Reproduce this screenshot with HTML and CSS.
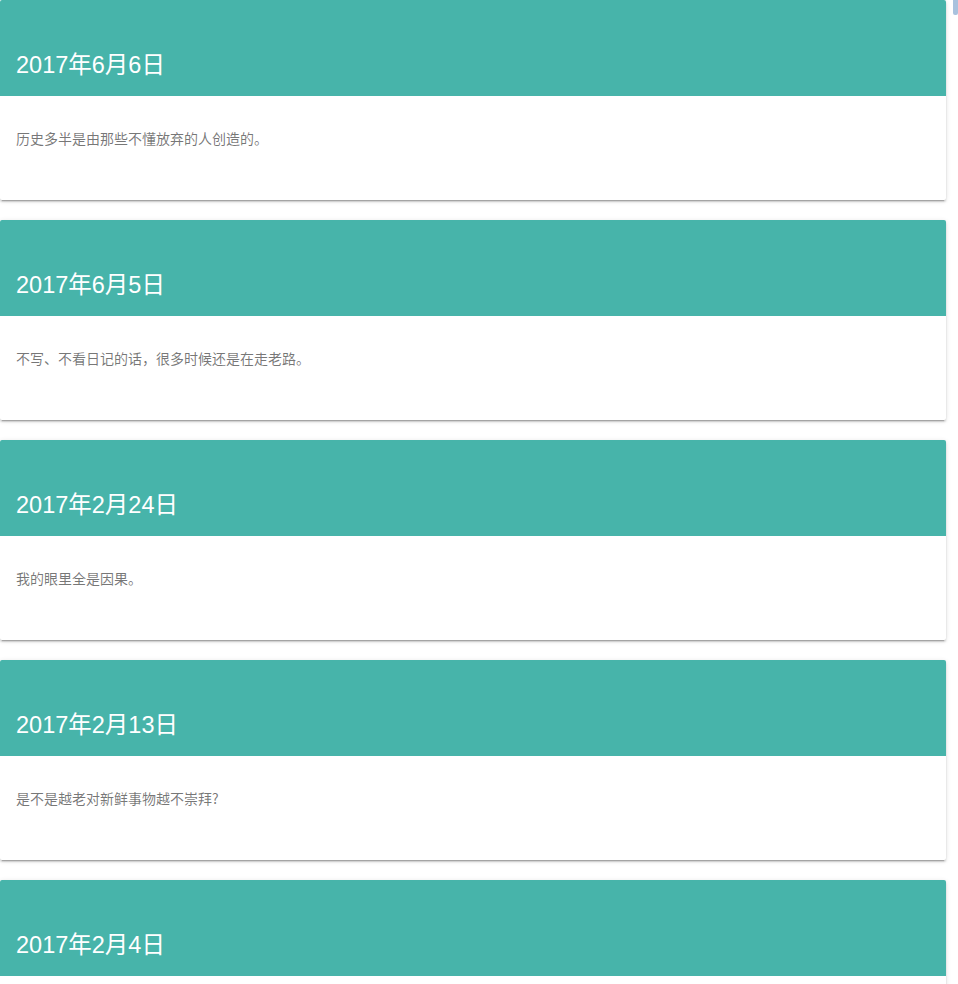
FILE: index.html
```html
<!DOCTYPE html>
<html lang="zh-CN">
<head>
<meta charset="utf-8">
<title>日记</title>
<link rel="stylesheet" href="styles.css">
</head>
<body>
<div class="list">
  <div class="card">
    <div class="card-title"><h2 class="card-title-text">2017年6月6日</h2></div>
    <div class="card-text">历史多半是由那些不懂放弃的人创造的。</div>
  </div>
  <div class="card">
    <div class="card-title"><h2 class="card-title-text">2017年6月5日</h2></div>
    <div class="card-text">不写、不看日记的话，很多时候还是在走老路。</div>
  </div>
  <div class="card">
    <div class="card-title"><h2 class="card-title-text">2017年2月24日</h2></div>
    <div class="card-text">我的眼里全是因果。</div>
  </div>
  <div class="card">
    <div class="card-title"><h2 class="card-title-text">2017年2月13日</h2></div>
    <div class="card-text">是不是越老对新鲜事物越不崇拜?</div>
  </div>
  <div class="card">
    <div class="card-title"><h2 class="card-title-text">2017年2月4日</h2></div>
    <div class="card-text"></div>
  </div>
</div>
<div class="scroll-thumb"></div>
</body>
</html>
```

FILE: styles.css
```css
html, body {
  margin: 0;
  padding: 0;
  background: #ffffff;
}

body {
  font-family: "Liberation Sans", Arial, "Noto Sans CJK SC", sans-serif;
  overflow: hidden;
}

.list {
  display: flex;
  flex-direction: column;
  gap: 20px;
  width: 946px;
}

.card {
  display: flex;
  flex-direction: column;
  min-height: 200px;
  background: #ffffff;
  border-radius: 2px;
  box-shadow: 0 2px 2px 0 rgba(0, 0, 0, 0.14), 0 3px 1px -2px rgba(0, 0, 0, 0.2), 0 1px 5px 0 rgba(0, 0, 0, 0.12);
  overflow: hidden;
}

.card-title {
  display: flex;
  align-items: flex-end;
  height: 96px;
  box-sizing: border-box;
  padding: 16px;
  background: #47b4aa;
  color: #ffffff;
}

.card-title-text {
  margin: 0;
  font-size: 23.5px;
  font-weight: 400;
  line-height: normal;
  font-family: "Liberation Sans", Arial, "Noto Sans CJK SC", sans-serif;
}

.card-text {
  flex: 1;
  padding: 33px 16px 16px;
  font-family: "Noto Sans CJK SC", sans-serif;
  font-size: 14px;
  line-height: 18px;
  color: rgba(0, 0, 0, 0.54);
}

.scroll-thumb {
  position: fixed;
  top: 0;
  right: 0;
  width: 5px;
  height: 15px;
  background: #a9c2de;
  border-radius: 0 0 2px 2px;
}
```
